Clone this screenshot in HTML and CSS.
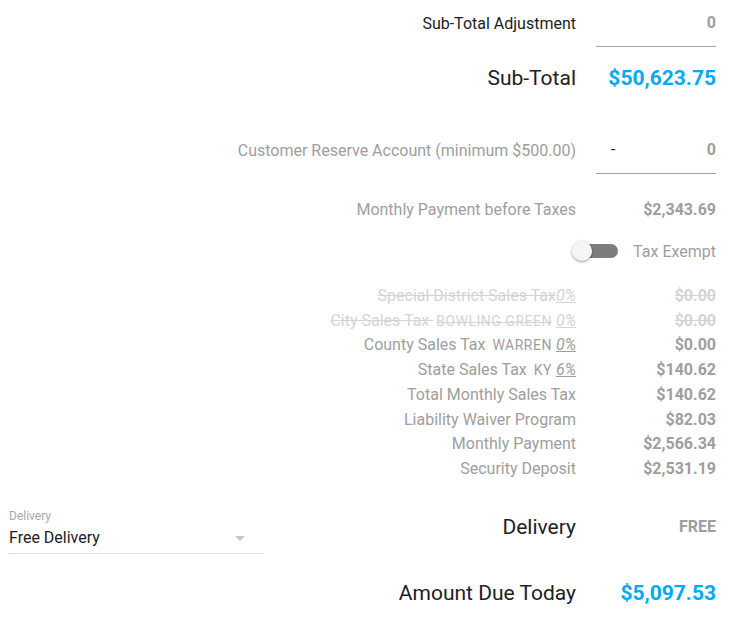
FILE: index.html
```html
<!DOCTYPE html>
<html lang="en">
<head>
  <meta charset="UTF-8">
  <title>Order Totals</title>
  <link rel="stylesheet" href="styles.css">
</head>
<body>

<div class="totals">

  <div class="row row-input">
    <div class="label dark">Sub-Total Adjustment</div>
    <div class="value field">0</div>
  </div>

  <div class="row row-big subtotal">
    <div class="label dark">Sub-Total</div>
    <div class="value blue">$50,623.75</div>
  </div>

  <div class="row row-input reserve">
    <div class="label">Customer Reserve Account (minimum $500.00)</div>
    <div class="value field"><span class="prefix">-</span>0</div>
  </div>

  <div class="row before-taxes">
    <div class="label">Monthly Payment before Taxes</div>
    <div class="value">$2,343.69</div>
  </div>

  <div class="toggle-row">
    <span class="toggle"><span class="track"></span><span class="knob"></span></span>
    <span class="toggle-text">Tax Exempt</span>
  </div>

  <div class="tax-list">
    <div class="row tax off">
      <div class="label"><span class="strike">Special District Sales Tax</span><span class="pct">0%</span></div>
      <div class="value">$0.00</div>
    </div>
    <div class="row tax off">
      <div class="label"><span class="strike">City Sales Tax <span class="place">BOWLING GREEN</span></span> <span class="pct">0%</span></div>
      <div class="value">$0.00</div>
    </div>
    <div class="row tax">
      <div class="label">County Sales Tax <span class="place">WARREN</span> <span class="pct">0%</span></div>
      <div class="value">$0.00</div>
    </div>
    <div class="row tax">
      <div class="label">State Sales Tax <span class="place">KY</span> <span class="pct">6%</span></div>
      <div class="value">$140.62</div>
    </div>
    <div class="row tax">
      <div class="label">Total Monthly Sales Tax</div>
      <div class="value">$140.62</div>
    </div>
    <div class="row tax">
      <div class="label">Liability Waiver Program</div>
      <div class="value">$82.03</div>
    </div>
    <div class="row tax">
      <div class="label">Monthly Payment</div>
      <div class="value">$2,566.34</div>
    </div>
    <div class="row tax">
      <div class="label">Security Deposit</div>
      <div class="value">$2,531.19</div>
    </div>
  </div>

  <div class="delivery-row">
    <div class="select">
      <div class="select-label">Delivery</div>
      <div class="select-value">Free Delivery<span class="arrow"></span></div>
    </div>
    <div class="row row-big delivery">
      <div class="label dark">Delivery</div>
      <div class="value free">FREE</div>
    </div>
  </div>

  <div class="row row-big amount">
    <div class="label dark">Amount Due Today</div>
    <div class="value blue">$5,097.53</div>
  </div>

</div>

</body>
</html>
```

FILE: styles.css
```css
body {
  margin: 0;
  font-family: Roboto, "Liberation Sans", sans-serif;
  color: #9e9e9e;
  background: #fff;
}

.totals {
  width: 746px;
  padding: 0 30px 0 9px;
  box-sizing: border-box;
}

.row {
  display: flex;
  align-items: center;
  font-size: 16px;
  line-height: 24px;
}

.row .label {
  flex: 1;
  text-align: right;
  white-space: nowrap;
}

.row .value {
  width: 120px;
  margin-left: 20px;
  text-align: right;
  font-weight: 700;
}

.dark {
  color: #212121;
}

.blue {
  color: #03a9f4;
}

/* rows with an underlined input on the right */
.row-input .label,
.row-input .value {
  padding: 11px 0 11px;
}

.field {
  border-bottom: 1px solid #a5a5a5;
  position: relative;
}

.prefix {
  position: absolute;
  left: 15px;
  font-weight: 400;
  color: #212121;
}

.row-big {
  font-size: 21px;
  line-height: 28px;
}

.subtotal {
  margin-top: 17px;
}

.reserve {
  margin-top: 35px;
}

.before-taxes {
  margin-top: 24px;
}

.toggle-row {
  display: flex;
  justify-content: flex-end;
  align-items: center;
  margin-top: 17px;
  height: 24px;
  font-size: 16px;
}

.toggle {
  position: relative;
  width: 46px;
  height: 24px;
  margin-right: 15px;
}

.track {
  position: absolute;
  left: 10px;
  top: 5px;
  width: 36px;
  height: 14px;
  border-radius: 7px;
  background: #7d7d7d;
}

.knob {
  position: absolute;
  left: 0;
  top: 2px;
  width: 20px;
  height: 20px;
  border-radius: 50%;
  background: #f5f5f5;
  box-shadow: 0 1px 3px rgba(0,0,0,0.4);
}

.tax-list {
  margin-top: 21px;
}

.tax {
  line-height: 24.7px;
}

.place {
  margin-left: 3px;
  font-size: 14px;
  line-height: 1;
  letter-spacing: 0.5px;
}

.pct {
  line-height: 1;
  font-style: italic;
  text-decoration: underline;
}

.off {
  color: #d4d4d4;
}

.strike,
.off .value {
  text-decoration: line-through;
}

.delivery-row {
  display: flex;
  align-items: flex-start;
  margin-top: 27px;
}

.select {
  width: 255px;
  border-bottom: 1px solid #e0e0e0;
  padding-bottom: 3px;
}

.select-label {
  font-size: 12px;
  line-height: 14px;
  color: #a8a8a8;
}

.select-value {
  position: relative;
  margin-top: 3px;
  font-size: 16px;
  line-height: 24px;
  color: #212121;
}

.arrow {
  position: absolute;
  right: 19px;
  top: 10px;
  border-left: 5px solid transparent;
  border-right: 5px solid transparent;
  border-top: 5px solid #c8c8c8;
}

.delivery {
  flex: 1;
  margin-top: 4px;
}

.free {
  font-size: 16px;
}

.amount {
  margin-top: 25px;
}
```
